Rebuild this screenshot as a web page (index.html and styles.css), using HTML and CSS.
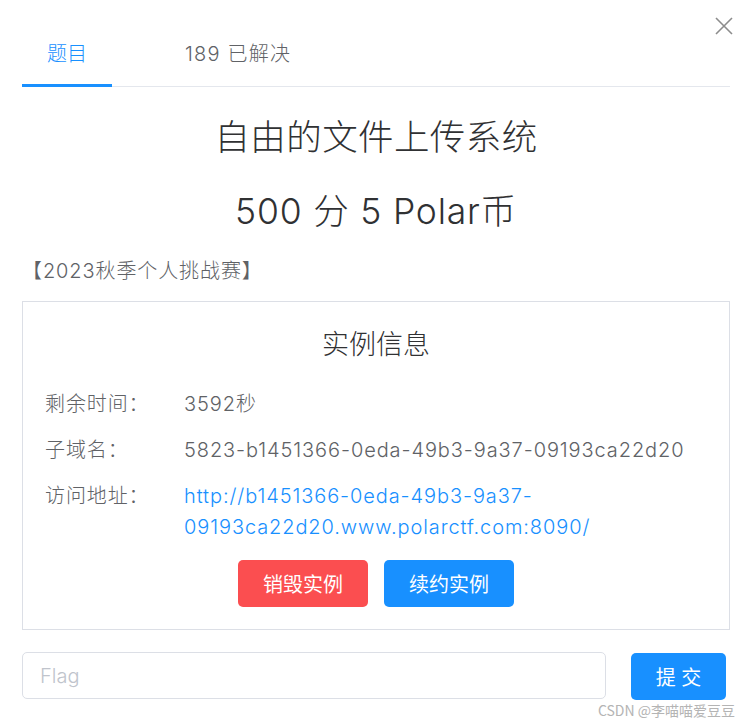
FILE: index.html
```html
<!DOCTYPE html>
<html lang="zh">
<head>
<meta charset="utf-8">
<title>题目</title>
<link rel="stylesheet" href="styles.css">
</head>
<body>
<div class="dialog">
  <button class="close" aria-label="关闭">
    <svg width="20" height="20" viewBox="0 0 20 20"><path d="M2 2 L18 18 M18 2 L2 18" stroke="#8c8c8c" stroke-width="1.6" fill="none"/></svg>
  </button>
  <div class="tabs">
    <div class="tab active">题目</div>
    <div class="tab">189 已解决</div>
  </div>
  <h1 class="title">自由的文件上传系统</h1>
  <h2 class="score">500 分 5 Polar币</h2>
  <p class="tag">【2023秋季个人挑战赛】</p>
  <section class="instance">
    <h3 class="inst-title">实例信息</h3>
    <div class="row"><span class="label">剩余时间：</span><span class="value">3592秒</span></div>
    <div class="row"><span class="label">子域名：</span><span class="value">5823-b1451366-0eda-49b3-9a37-09193ca22d20</span></div>
    <div class="row"><span class="label">访问地址：</span><a class="value link" href="#">http://b1451366-0eda-49b3-9a37-09193ca22d20.www.polarctf.com:8090/</a></div>
    <div class="actions">
      <button class="btn btn-red">销毁实例</button>
      <button class="btn btn-blue">续约实例</button>
    </div>
  </section>
  <div class="submit-row">
    <input class="flag" type="text" placeholder="Flag">
    <button class="btn btn-blue submit">提 交</button>
  </div>
  <div class="watermark">CSDN @李喵喵爱豆豆</div>
</div>
</body>
</html>
```
FILE: styles.css
```css
* { box-sizing: border-box; }
html, body { margin: 0; padding: 0; background: #fff; }
body {
  font-family: Inter, "Noto Sans CJK SC", sans-serif;
  color: #303133;
}
.dialog {
  position: relative;
  width: 745px;
  height: 723px;
  padding: 30px 15px 0 22px;
}
.close {
  position: absolute;
  top: 16px;
  right: 11px;
  width: 20px;
  height: 20px;
  padding: 0;
  border: 0;
  background: none;
}
.close svg { display: block; }
.tabs {
  display: flex;
  gap: 48px;
  border-bottom: 1px solid #e4e7ed;
  height: 57px;
}
.tab {
  height: 57px;
  padding: 0 25px;
  line-height: 48px;
  font-size: 20px;
  font-weight: 300;
  color: #606266;
  margin-bottom: -1px;
}
.tab + .tab { letter-spacing: 1.2px; }
.tab.active {
  color: #1890ff;
  border-bottom: 3px solid #1890ff;
}
.title {
  margin: 26px 0 0;
  text-align: center;
  font-size: 35.5px;
  font-weight: 300;
  line-height: 50px;
  letter-spacing: 0.4px;
  color: #303133;
}
.score {
  margin: 24px 0 0;
  text-align: center;
  font-size: 35.5px;
  font-weight: 300;
  line-height: 50px;
  letter-spacing: 0.8px;
  color: #303133;
}
.tag {
  margin: 19px 0 0;
  font-size: 20px;
  font-weight: 300;
  line-height: 30px;
  letter-spacing: 0.9px;
  color: #606266;
}
.instance {
  margin-top: 15px;
  width: 708px;
  border: 1px solid #dcdfe6;
  padding: 23px 22px 22px;
}
.inst-title {
  margin: 0 0 24px;
  text-align: center;
  font-size: 27px;
  font-weight: 300;
  line-height: 40px;
  color: #303133;
}
.row {
  display: flex;
  font-size: 20px;
  font-weight: 300;
  line-height: 31px;
  letter-spacing: 0.9px;
  margin-bottom: 15px;
  color: #606266;
}
.row:nth-of-type(3) { margin-bottom: 17px; }
.label { flex: 0 0 139px; }
.value { flex: 1; min-width: 0; }
.link { color: #1890ff; text-decoration: none; }
.actions {
  display: flex;
  justify-content: center;
  gap: 16px;
}
.btn {
  border: 0;
  border-radius: 5px;
  color: #fff;
  font-family: inherit;
  font-size: 20px;
  width: 130px;
  height: 47px;
  padding: 0;
}
.btn-red { background: #fb4e50; }
.btn-blue { background: #1890ff; }
.submit-row {
  display: flex;
  gap: 25px;
  margin-top: 22px;
  width: 704px;
}
.flag {
  flex: 0 0 584px;
  height: 47px;
  border: 1px solid #dcdfe6;
  border-radius: 5px;
  padding: 0 17px;
  font-family: inherit;
  font-size: 20px;
  font-weight: 300;
  color: #606266;
  outline: none;
}
.flag::placeholder { color: #c0c4cc; }
.submit {
  width: 95px;
  margin-top: 1px;
}
.watermark {
  position: absolute;
  right: 10px;
  bottom: 4px;
  font-family: "Noto Sans CJK SC", sans-serif;
  font-size: 14px;
  color: #b4b4b4;
  line-height: 18px;
}
```
